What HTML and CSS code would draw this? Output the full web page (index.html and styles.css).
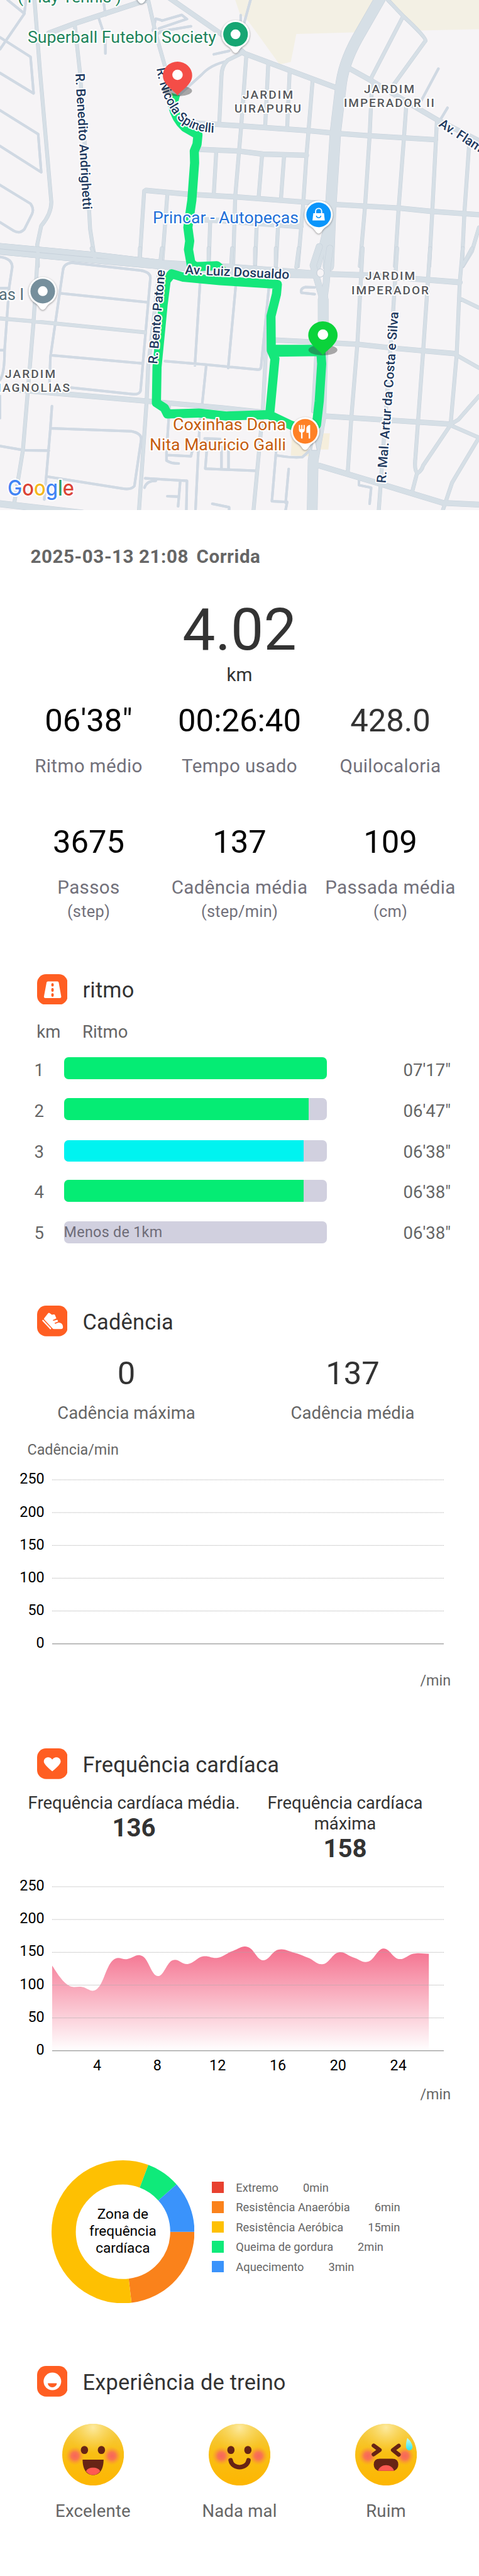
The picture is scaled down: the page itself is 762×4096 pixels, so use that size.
FILE: index.html
```html
<!DOCTYPE html>
<html lang="pt-BR">
<head>
<meta charset="utf-8">
<title>Corrida</title>
<link rel="stylesheet" href="styles.css">
</head>
<body>
<main class="page">

<svg class="map" viewBox="0 0 762 811" width="762" height="811">
  <defs>
    <g id="roads-north">
      <path class="w4" d="M25,0L80,80L0,290M85,0L80,75M0,220L100,335L110,550L0,430M0,650L125,790L135,1015L0,860M0,1090L100,1200Q112,1230 105,1260L80,1350Q65,1380 45,1360L0,1310M340,20L345,90M322,100L345,225V315M530,120L510,110L500,180M530,122L595,88L612,112L520,168M525,185L625,155M500,215L525,190M700,320L750,300M745,360Q690,380 660,440L580,570M820,0L797,150M788,90V150M1435,405L1380,590M1465,635L1440,710"/>
      <path class="w6" d="M113,0L130,400L168,1190Q168,1260 135,1330L122,1440L124,1568M245,150L262,430L292,1250L295,1350L308,1500M485,0L510,200L540,390M790,315L745,355Q725,390 725,450L718,720M806,335L790,735L783,880L770,1160L763,1568M878,380L868,745M948,430L940,755M1023,480L1010,770L1003,920L993,1190L975,1568M708,890L700,1140M858,912L847,1155M930,918L920,1165M472,1125L458,1515M548,1140L530,1568M688,1310L683,1568M840,1335L835,1568M910,1340L903,1568M1270,0L1320,95Q1395,220 1393,240L1280,520M1320,95L1215,460M1430,720L1415,1250L1405,1568M1330,620L1322,820L1305,1225L1293,1568M1218,480L1210,800L1195,1215L1178,1568M1535,870L1520,1260L1512,1568M1568,1340L1545,1480L1515,1568"/>
      <path class="w8" d="M540,-30L740,220L800,315L1098,515M480,0L250,135L160,195M640,725L790,742L1010,770L1098,785L1210,800L1425,823M650,880L780,890L860,908L1003,915M478,1122L620,1145L770,1160L990,1190L1100,1205L1300,1225L1410,1245L1568,1265M670,1295L720,1300L985,1335M1140,400L1220,480L1350,620L1435,710L1568,830"/>
      <path class="w10" d="M0,1450L310,1502L530,1548M0,1484L310,1535L540,1572"/>
      <path class="w12" d="M1075,1300L1040,1568"/>
      <path class="w18" d="M1245,-10L1170,225Q1122,380 1115,520L1098,780L1082,1240L1075,1568"/>
    </g>
    <g id="roads-south">
      <path class="w4" d="M0,50Q40,60 40,110L30,230L15,600Q15,740 0,775M0,235H30M0,600H15M235,85Q208,90 206,130L165,640L162,800M235,85L460,130Q495,140 492,180L460,840Q455,865 430,858L230,820M200,265L485,318M170,630L465,678M170,930L165,1060L145,1480M165,1060L430,1078Q465,1090 462,1130L440,1400Q430,1425 400,1415L155,1345M0,1165L80,1190L160,1192M0,870V1000M655,200L638,690M772,215L747,705M540,665L675,685L845,715Q855,715 855,690L880,235M675,690L660,950M1030,230L1000,228Q982,235 987,262L1030,270M555,930L545,1200V1250Q560,1268 585,1268M545,1218L625,1225L630,1190M680,1120L672,1298L835,1310M670,1120L720,1123M725,1170V1300M748,1170V1305M655,980L640,1541M475,1355L612,1370L610,1541M590,1370L583,1520M548,1460L585,1463M473,1410Q480,1370 510,1370M905,1170L890,1490L940,1495L935,1541M905,1220Q950,1235 990,1230L1015,1190M945,1300L935,1500M1175,1365V1395L1215,1410L1210,1505M695,1505L750,1525V1541"/>
      <path class="w6" d="M125,0L110,430L75,1190L45,1520M300,0L310,55M458,0V50M0,413L110,430L475,495M530,0L485,700L480,900L455,1545M683,0V80M760,0L757,90M835,0V90M903,0V100M978,0L970,110M875,480L870,620L860,965L830,1541M1035,640L1025,960M1187,0L1170,560L1150,1000L1138,1330M1300,0L1287,370L1240,1541M1408,0L1385,610L1360,1230Q1355,1310 1367,1325Q1380,1310 1385,1280L1475,1040M1365,1325L1350,1430M1515,0L1505,200L1495,625L1475,1040M1510,300L1568,350M1545,0L1515,100M1490,625L1568,705M1568,870L1500,1010L1472,1040L1568,1115M1568,1115L1480,1380L1450,1541"/>
      <path class="w8" d="M65,835L480,900L730,940L860,965M900,540L1170,565L1300,590L1490,620M1060,988L1470,1035"/>
      <path class="w10" d="M0,-14L310,38L530,85L770,110L1050,150L1200,158L1505,200M0,20L310,72L550,110L860,155L1040,160M1045,1280L1240,1385L1450,1500L1568,1510"/>
      <path class="w12" d="M1045,-10L1025,100L1040,195L1058,310M1080,0L1072,100L1068,200L1060,310M0,1505L120,1530L270,1560"/>
      <path class="w16" d="M1058,300V500L1050,1000L1025,1250L1022,1545"/>
    </g>
  </defs>
  <rect class="land" width="762" height="811"/>
  <g transform="scale(.48597 .26986)">
    <path class="park" d="M770,0L785,80L815,130L915,380L952,365L970,200L1180,190L1225,0ZM1275,0L1345,130L1370,180L1568,172V0Z"/>
    <use href="#roads-north" class="casing"/>
    <use href="#roads-north" class="street"/>
  </g>
  <g transform="translate(0 394.9) scale(.48597 .26986)">
    <path class="plaza" d="M955,1120L952,1220L1010,1225L1035,1150L1060,1090H1080L1075,1185H1000Z"/>
    <use href="#roads-south" class="casing"/>
    <use href="#roads-south" class="street"/>
    <ellipse class="island" cx="1049" cy="145" rx="12" ry="24"/>
    <path class="island" d="M1020,1190L1028,1100L1038,1190Z"/>
  </g>
  <g class="route">
    <path transform="scale(.48597 .26986)" d="M575,555L565,620Q575,700 605,750L648,795L645,850L636,890L637,960L628,1180L615,1340L621,1420L617,1470L627,1570"/>
    <path transform="translate(0 394.9) scale(.48597 .26986)" d="M627,90L640,108L710,102L740,150M1050,600L1053,680L1045,900L1036,1040L1010,1080L950,1040L880,980L740,988L650,970L548,976L538,940L512,910L514,700L534,330L544,190L562,150L600,170L720,190L908,212L905,270L887,400L888,600L900,650L883,975M888,595L1050,595M900,612L1050,608"/>
  </g>

  <g class="road-label">
    <path id="spinelli" d="M249,109C254,140 264,168 283,189C300,206 325,214 362,210" fill="none" stroke="none"/>
    <text><textPath href="#spinelli" textLength="151" lengthAdjust="spacingAndGlyphs">R. Nicola Spinelli</textPath></text>
    <text transform="translate(120 117) rotate(86.8)" textLength="217" lengthAdjust="spacingAndGlyphs">R. Benedito Andrighetti</text>
    <text transform="translate(697 200) rotate(33)">Av. Flam</text>
    <text transform="translate(294 435.5) rotate(2.8)" textLength="166" lengthAdjust="spacingAndGlyphs">Av. Luiz Dosualdo</text>
    <text transform="translate(250 579) rotate(-85.2)" textLength="150" lengthAdjust="spacingAndGlyphs">R. Bento Patone</text>
    <text transform="translate(613.5 768.5) rotate(-85.7)" textLength="273" lengthAdjust="spacingAndGlyphs">R. Mal. Artur da Costa e Silva</text>
  </g>
  <g class="district">
    <text x="386" y="156.5" textLength="80">JARDIM</text>
    <text x="373" y="179" textLength="106">UIRAPURU</text>
    <text x="579" y="148" textLength="80">JARDIM</text>
    <text x="547" y="170.3" textLength="144">IMPERADOR II</text>
    <text x="581" y="445.4" textLength="79">JARDIM</text>
    <text x="559" y="467.8" textLength="123">IMPERADOR</text>
    <text x="8" y="600.5" textLength="80">JARDIM</text>
    <text x="-15" y="623" textLength="126">MAGNOLIAS</text>
  </g>
  <g class="place">
    <text class="green" x="28" y="4" textLength="165" lengthAdjust="spacingAndGlyphs">( Play Tennis )</text>
    <text class="green" x="44" y="67.5" textLength="300" lengthAdjust="spacingAndGlyphs">Superball Futebol Society</text>
    <text class="blue" x="243" y="355.4" textLength="232" lengthAdjust="spacingAndGlyphs">Princar - Autopeças</text>
    <text class="slate" x="-2" y="476.7">as I</text>
    <text class="orange" x="275" y="683.6" textLength="180" lengthAdjust="spacingAndGlyphs">Coxinhas Dona</text>
    <text class="orange" x="238" y="715.5" textLength="217" lengthAdjust="spacingAndGlyphs">Nita Mauricio Galli</text>
  </g>

  <defs>
    <path id="poi" d="M0,29.8C-2,29.8 -4,28 -5.500,25.500C-8,21 -11,20 -15.500,16.300A22.500,22.500 0 1 1 15.500,16.300C11,20 8,21 5.500,25.500C4,28 2,29.800 0,29.800Z"/>
    <path id="pin" d="M0,32.500C-3,25 -23.300,16 -23.300,0A23.300,22 0 0 1 23.300,0C23.300,16 3,25 0,32.500Z"/>
  </defs>
  <g class="poi" transform="translate(225 -24)"><use href="#poi"/></g>
  <g class="poi" transform="translate(374.700 54.500)"><use href="#poi"/><circle r="19.600" fill="#17a673"/><circle r="7.800"/></g>
  <g class="poi" transform="translate(506.900 341.600)"><use href="#poi"/><circle r="19.600" fill="#0a95fb"/>
    <path d="M-8.500,-2.500H8.500L9.800,9H-9.800Z"/><path d="M-4.800,-2V-5.500a4.800,4.800 0 0 1 9.600,0V-2" fill="none" stroke="#fff" stroke-width="1.800"/><path d="M-3.500,1.500a3.500,3.200 0 0 0 7,0" fill="none" stroke="#0a95fb" stroke-width="1.600"/></g>
  <g class="poi" transform="translate(68 462.900)"><use href="#poi"/><circle r="19.600" fill="#768f9c"/><circle r="7.800"/></g>
  <g class="poi" transform="translate(485.500 685.800)"><use href="#poi"/><circle r="19.600" fill="#ff8126"/>
    <path d="M-10,-10h1.900v6.500h1.800V-10h1.900v6.500h1.800V-10h1.900v8C-.7,.3 -2.300,1.600 -4.200,2V11.500h-2.400V2C-8.500,1.600 -10,.3 -10,-2ZM7.900,-10V11.500H5.500V2.500H1.900V-4C1.900,-7.500 4.500,-10 7.900,-10Z"/></g>
  <ellipse class="pin-shade" cx="282.500" cy="144.500" rx="23" ry="8.500"/>
  <g transform="translate(282.400 120)"><use href="#pin" fill="#f44d47"/><ellipse rx="8.300" ry="8.200" cy="-1" fill="#fff"/></g>
  <ellipse class="pin-shade" cx="513.700" cy="556.500" rx="23" ry="8.500"/>
  <g transform="translate(513.700 533)"><use href="#pin" fill="#0bd33b"/><ellipse rx="8.300" ry="8.200" cy="-1" fill="#fff"/></g>
  <text class="google" x="12" y="787.500" textLength="106" lengthAdjust="spacingAndGlyphs"><tspan fill="#4285f4">G</tspan><tspan fill="#db4437">o</tspan><tspan fill="#f4b81c">o</tspan><tspan fill="#4285f4">g</tspan><tspan fill="#34a05a">l</tspan><tspan fill="#db4437">e</tspan></text>
</svg>

<section class="summary">
  <h1 class="when"><span>2025-03-13 21:08</span><span>Corrida</span></h1>
  <p class="distance">4.02</p>
  <p class="distance-unit">km</p>
  <div class="stats">
    <div class="stat"><b>06'38"</b><span>Ritmo médio</span></div>
    <div class="stat"><b>00:26:40</b><span>Tempo usado</span></div>
    <div class="stat soft"><b>428.0</b><span>Quilocaloria</span></div>
    <div class="stat"><b>3675</b><span>Passos</span><small>(step)</small></div>
    <div class="stat"><b>137</b><span>Cadência média</span><small>(step/min)</small></div>
    <div class="stat"><b>109</b><span>Passada média</span><small>(cm)</small></div>
  </div>
</section>

<section class="pace">
  <header class="head">
    <svg class="badge" viewBox="0 0 24 24"><rect class="tile" width="24" height="24" rx="7"/><path d="M8.500,5.700H15.900Q16.800,5.700 17,6.600L18.900,17.400Q19.100,18.700 17.800,18.700H6.500Q5.200,18.700 5.400,17.400L7.400,6.600Q7.600,5.700 8.500,5.700Z"/><path d="M12.100,8V8.700M12.100,11.800V12.800M12.100,15.800V16.800" stroke="#ff5e22" stroke-width="1.900" stroke-linecap="round"/></svg>
    <h2>ritmo</h2>
  </header>
  <div class="pace-cols"><span>km</span><span>Ritmo</span></div>
  <ol class="splits">
    <li><span>1</span><div class="bar"><i style="width:100%"></i></div><time>07'17"</time></li>
    <li><span>2</span><div class="bar"><i style="width:93.1%"></i></div><time>06'47"</time></li>
    <li class="low"><span>3</span><div class="bar best"><i style="width:91.2%"></i></div><time>06'38"</time></li>
    <li><span>4</span><div class="bar"><i style="width:91.2%"></i></div><time>06'38"</time></li>
    <li class="low"><span>5</span><div class="bar">Menos de 1km</div><time>06'38"</time></li>
  </ol>
</section>

<section class="cadence">
  <header class="head">
    <svg class="badge" viewBox="0 0 24 24"><rect class="tile" width="24" height="24" rx="7"/><path d="M5.600,9.800L8.600,6Q9.200,5.400 9.900,5.900L11.600,7.200L13.200,6.900Q13.900,6.900 14.100,7.500L15.100,10L12.300,11.300L12.700,12L15.900,11.100L16.500,12.500L13.700,13.600L14.200,14.300L16.300,13.400C19,13 20.300,15 20.300,16.800Q20.300,18.400 18.700,18.400H13.200Q12.600,18.400 12.100,17.900L5.700,11Q5.100,10.400 5.600,9.800Z"/><path d="M4.600,11.700L10.500,18" stroke="#fff" stroke-width="1.100" stroke-linecap="round"/></svg>
    <h2>Cadência</h2>
  </header>
  <div class="pair">
    <div><b>0</b><span>Cadência máxima</span></div>
    <div><b>137</b><span>Cadência média</span></div>
  </div>
  <p class="axis-title">Cadência/min</p>
  <div class="chart">
    <div class="scale"><span>250</span><span>200</span><span>150</span><span>100</span><span>50</span><span>0</span></div>
    <svg class="plot" viewBox="0 0 623 313"><path class="grid" d="M0,26H623M0,78.100H623M0,130.300H623M0,182.400H623M0,234.600H623"/><path class="base" d="M0,286.700H623"/></svg>
  </div>
  <p class="unit">/min</p>
</section>

<section class="heart">
  <header class="head">
    <svg class="badge" viewBox="0 0 24 24"><rect class="tile" width="24" height="24" rx="7"/><path d="M11.900,18Q5.300,12.500 5.300,10.300C5.300,6.800 9.800,5.800 11.900,8.700C14,5.800 18.500,6.800 18.500,10.300Q18.500,12.500 11.900,18Z"/></svg>
    <h2>Frequência cardíaca</h2>
  </header>
  <div class="rates">
    <div>Frequência cardíaca média.<b>136</b></div>
    <div>Frequência cardíaca máxima<b>158</b></div>
  </div>
  <div class="chart">
    <div class="scale"><span>250</span><span>200</span><span>150</span><span>100</span><span>50</span><span>0</span></div>
    <svg class="plot" viewBox="0 0 623 313">
      <defs><linearGradient id="pulse" x1="0" y1="0" x2="0" y2="1"><stop offset="0" stop-color="#f46e8c"/><stop offset="1" stop-color="#fff"/></linearGradient></defs>
      <path transform="translate(-82.600 -238) scale(.48597 .40483)" fill="url(#pulse)" d="M170,962C180,980 199,1019 219,1036S249,1042 269,1046S298,1073 318,1052S347,966 367,943S396,940 416,936S446,912 466,925S495,1000 515,1003S544,950 564,941S594,959 614,956S643,931 663,926S692,935 712,931S742,912 762,904S791,882 811,889S840,939 860,941S889,906 909,900S939,904 959,910S988,922 1008,931S1037,960 1057,956S1087,915 1107,910S1136,923 1156,930S1185,953 1205,946S1234,897 1254,895S1284,932 1304,936S1333,919 1353,915S1383,915 1403,916V1296H170Z"/>
      <path class="grid" d="M0,26H623M0,78.100H623M0,130.300H623M0,182.400H623M0,234.600H623"/><path class="base" d="M0,286.700H623"/>
    </svg>
  </div>
  <div class="minutes"><span>4</span><span>8</span><span>12</span><span>16</span><span>20</span><span>24</span></div>
  <p class="unit">/min</p>
  <div class="zones">
    <div class="donut">
      <svg viewBox="0 0 227.400 227.400">
        <g fill="none" stroke-width="38.600">
          <circle cx="113.700" cy="113.700" r="94.400" pathLength="26" stroke="#fa821b" stroke-dasharray="6 20"/>
          <circle cx="113.700" cy="113.700" r="94.400" pathLength="26" stroke="#fec002" stroke-dasharray="15 11" stroke-dashoffset="-6"/>
          <circle cx="113.700" cy="113.700" r="94.400" pathLength="26" stroke="#0fea7a" stroke-dasharray="2 24" stroke-dashoffset="-21"/>
          <circle cx="113.700" cy="113.700" r="94.400" pathLength="26" stroke="#3a93fb" stroke-dasharray="3 23" stroke-dashoffset="-23"/>
        </g>
      </svg>
      <p>Zona de<br>frequência<br>cardíaca</p>
    </div>
    <ul class="legend">
      <li class="extreme"><span>Extremo</span>0min</li>
      <li class="anaerobic"><span>Resistência Anaeróbia</span>6min</li>
      <li class="aerobic"><span>Resistência Aeróbica</span>15min</li>
      <li class="burn"><span>Queima de gordura</span>2min</li>
      <li class="warmup"><span>Aquecimento</span>3min</li>
    </ul>
  </div>
</section>

<section class="feeling">
  <header class="head">
    <svg class="badge" viewBox="0 0 24 24"><rect class="tile" width="24" height="24" rx="7"/><circle cx="12" cy="12.100" r="6.900"/><path d="M8.400,13.500H15.500A3.500,3.200 0 0 1 8.400,13.500Z" fill="#ff5e22"/></svg>
    <h2>Experiência de treino</h2>
  </header>
  <div class="faces">
    <div>
      <svg class="face" viewBox="0 0 100 100">
        <defs>
          <linearGradient id="skin" x1="0" y1="0" x2="0" y2="1"><stop offset="0" stop-color="#f3cf52"/><stop offset=".45" stop-color="#f9bf15"/><stop offset="1" stop-color="#fdb602"/></linearGradient>
          <radialGradient id="shine" cx=".5" cy=".06" r=".42"><stop offset="0" stop-color="#fdeaa0"/><stop offset="1" stop-color="#fbd44a" stop-opacity="0"/></radialGradient>
          <radialGradient id="blush"><stop offset="0" stop-color="#f8655a"/><stop offset=".4" stop-color="#f8695a" stop-opacity=".85"/><stop offset="1" stop-color="#fb9530" stop-opacity="0"/></radialGradient>
          <linearGradient id="drop" x1="0" y1="0" x2="0" y2="1"><stop offset="0" stop-color="#c5fbf4"/><stop offset="1" stop-color="#2ce6f3"/></linearGradient>
          <g id="head"><circle cx="50" cy="50" r="50" fill="url(#skin)"/><circle cx="50" cy="50" r="50" fill="url(#shine)"/><circle cx="20.500" cy="52" r="15" fill="url(#blush)"/><circle cx="80.500" cy="52" r="15" fill="url(#blush)"/></g>
        </defs>
        <use href="#head"/><g fill="#672415"><ellipse cx="36" cy="42.400" rx="5.900" ry="6.500"/><ellipse cx="63.500" cy="42.400" rx="5.900" ry="6.500"/><path d="M33,58H67C67,73 61,83 50,83S33,73 33,58Z"/></g><path fill="#ff5a52" d="M38.600,77C41,69 59,69 61.400,77C58,81.500 54,83 50,83S42,81.500 38.600,77Z"/>
      </svg>
      <span>Excelente</span>
    </div>
    <div>
      <svg class="face" viewBox="0 0 100 100"><use href="#head"/><g fill="#672415"><ellipse cx="36" cy="42.400" rx="5.900" ry="6.500"/><ellipse cx="63.500" cy="42.400" rx="5.900" ry="6.500"/></g><path d="M35.500,59C38,74 62,74 64.500,59" fill="none" stroke="#672415" stroke-width="7.200" stroke-linecap="round"/></svg>
      <span>Nada mal</span>
    </div>
    <div>
      <svg class="face" viewBox="0 0 100 100"><use href="#head"/><path d="M30,35.300L39.700,42.300L30,49.400M70.600,35.500L61.200,42.500L70.600,50" fill="none" stroke="#672415" stroke-width="6.600" stroke-linecap="round" stroke-linejoin="round"/><path fill="#672415" d="M40,56.600H60Q69.900,56.600 69.900,66Q69.900,73 63,76.100H37Q30.100,73 30.100,66Q30.100,56.600 40,56.600Z"/><path fill="#ff5a52" d="M37,76.100C41,64 59,64 63,76.100Z"/><path fill="url(#drop)" d="M84.500,23C88,26 93,32 93,37.500A5.300,5.300 0 0 1 82.400,37.500C82,33 83,27 84.500,23Z"/></svg>
      <span>Ruim</span>
    </div>
  </div>
</section>
</main>
</body>
</html>
```
FILE: styles.css
```css
* { box-sizing: border-box; margin: 0; padding: 0; }
body { background: #fff; font-family: Roboto, "Liberation Sans", sans-serif; color: #333; }
.page { width: 762px; height: 4096px; display: flex; flex-direction: column; overflow: hidden; }
b, h1, h2 { font-weight: 400; }
ul, ol { list-style: none; }

/* Map */
.map { display: block; flex: none; overflow: hidden; }
.land { fill: #f6f4f6; }
.park { fill: #f3f0e4; }
.plaza { fill: #f5eedc; }
.island { fill: #f6f4f6; stroke: #c4ced8; vector-effect: non-scaling-stroke; }
.casing, .street { fill: none; stroke-linecap: round; stroke-linejoin: round; }
.casing { stroke: #c6d0da; --case: 1px; }
.street { stroke: #d6dfe6; --case: 0px; }
.casing path, .street path, #roads-north path, #roads-south path { vector-effect: non-scaling-stroke; }
.w4 { stroke: #d0d9e3; stroke-width: 4px; }
.w6 { stroke-width: calc(5.2px + var(--case)); }
.w8 { stroke-width: calc(7.4px + var(--case)); }
.w10 { stroke-width: calc(8.2px + var(--case)); }
.w12 { stroke-width: calc(10px + var(--case)); }
.w16 { stroke-width: calc(16px + var(--case)); }
.w18 { stroke-width: calc(17px + var(--case)); }
.route path { fill: none; stroke: #15e77b; stroke-width: 14.500px; stroke-linejoin: round; vector-effect: non-scaling-stroke; }
.map text { stroke: #fff; stroke-width: 4px; stroke-linejoin: round; paint-order: stroke; }
.road-label { font-size: 20.500px; font-weight: 500; fill: #1f3a5f; }
.district { font-size: 19px; fill: #55575b; font-weight: 500; }
.place { font-size: 25.400px; }
.green { fill: #1f845c; }
.blue { fill: #1f6fd8; }
.slate { fill: #55707c; }
.orange { fill: #c65d10; }
.poi { fill: #fff; }
.poi > use { filter: drop-shadow(0 1px 1.500px rgba(0, 0, 0, .4)); }
.pin-shade { fill: #333; opacity: .4; }
.google { font: 500 34px Inter, Roboto, sans-serif; }

/* Summary */
.summary { height: 737.600px; flex: none; padding-top: 56px; text-align: center; }
.when { display: flex; gap: 12.500px; padding-left: 48.500px; font-size: 29.600px; line-height: 36px; font-weight: 700; letter-spacing: .550px; color: #666; }
.distance { margin-top: 48.500px; font-size: 93px; line-height: 100px; }
.distance-unit { margin-top: 3px; font-size: 29.600px; line-height: 36px; }
.stats { display: grid; grid-template-columns: repeat(3, 240px); justify-content: center; row-gap: 72.400px; margin-top: 25.500px; }
.stat { display: flex; flex-direction: column; align-items: center; white-space: nowrap; }
.stat b { font-size: 50.800px; line-height: 60px; color: #000; }
.stat.soft b { color: #333; }
.stat span { margin-top: 24.200px; font-size: 29.600px; line-height: 36px; letter-spacing: .350px; color: #72717b; }
.stat small { margin-top: 4.800px; font-size: 25.400px; line-height: 30px; letter-spacing: .250px; color: #72717b; }

/* Section heads */
.head { display: flex; align-items: center; height: 48.700px; padding-left: 58.800px; gap: 24px; }
.head h2 { margin-top: 2.500px; font-size: 34.400px; line-height: 42px; letter-spacing: .200px; }
.badge { width: 48.700px; height: 48.700px; fill: #fff; flex: none; }
.tile { fill: #ff5e22; }

/* Pace */
.pace { height: 527.900px; flex: none; font-size: 27.500px; line-height: 34px; color: #666; }
.pace h2 { color: #333; }
.pace-cols { display: grid; grid-template-columns: 72.700px 1fr; margin-top: 26.500px; padding-left: 58.300px; }
.splits { margin-top: 11.500px; }
.splits li { display: grid; grid-template-columns: 47px 418px 1fr; align-items: center; height: 64.900px; padding: 0 45px 0 54.600px; }
.splits time { text-align: right; }
.bar { position: relative; top: -3px; height: 34.600px; border-radius: 7px; overflow: hidden; background: #d1d0df; font-size: 23.300px; line-height: 35px; letter-spacing: .300px; color: #6e6c78; }
.low .bar { top: -1.500px; }
.bar i { display: block; height: 100%; background: #05ec74; }
.bar.best i { background: #00f3f0; }

/* Charts */
.chart { display: flex; gap: 12px; }
.scale { width: 70.600px; text-align: right; font-size: 23.300px; color: #000; }
.scale span { display: block; height: 52.140px; line-height: 49.400px; }
.plot { width: 623px; height: 313px; }
.grid { stroke: #a8a8a8; stroke-width: 1; stroke-dasharray: 1 1; }
.base { stroke: #a8a8a8; stroke-width: 1.600; }
.unit { padding-right: 45px; text-align: right; font-size: 23.300px; line-height: 28px; color: #666; }

/* Cadence */
.cadence { height: 703.500px; flex: none; }
.pair { display: grid; grid-template-columns: 360px 360px; justify-content: center; margin-top: 29px; text-align: center; }
.pair b { display: block; font-size: 50.800px; line-height: 60px; }
.pair span { display: block; margin-top: 16.300px; font-size: 27.500px; line-height: 34px; color: #666; }
.axis-title { margin-top: 26.400px; padding-left: 43.500px; font-size: 23.300px; line-height: 28px; color: #666; }
.cadence .chart { margin-top: 8.600px; }
.cadence .unit { margin-top: 17.800px; }

/* Heart rate */
.heart { height: 982.400px; flex: none; }
.rates { display: grid; grid-template-columns: 340px 300px; column-gap: 16px; margin-top: 21.800px; padding-left: 43px; font-size: 27.500px; line-height: 33px; text-align: center; height: 113px; }
.rates b { display: block; margin-top: 1px; font-size: 40.200px; line-height: 46px; font-weight: 700; }
.rates div:first-child { white-space: nowrap; }
.heart .chart { margin-top: 10.700px; }
.minutes { display: grid; grid-template-columns: repeat(6, 95.840px); margin-top: -16.700px; padding-left: 106.600px; text-align: center; font-size: 23.300px; line-height: 28px; color: #000; }
.heart .unit { margin-top: 17.600px; }
.zones { display: flex; margin-top: 90.700px; padding-left: 81.700px; }
.donut { display: grid; place-items: center; width: 227.400px; height: 227.400px; }
.donut > * { grid-area: 1 / 1; }
.donut svg { width: 100%; height: 100%; }
.donut p { font-size: 22.600px; line-height: 26.800px; text-align: center; color: #000; }
.legend { margin: 27.800px 0 0 28.200px; font-size: 18.300px; color: #666; }
.legend li { display: flex; align-items: center; height: 31.500px; }
.legend li::before { content: ""; width: 18.600px; height: 18.600px; margin: -1px 19.500px 0 0; background: var(--zone); }
.legend span { margin-right: 39px; }
.extreme { --zone: #e8412f; }
.anaerobic { --zone: #fa821b; }
.aerobic { --zone: #fec002; }
.burn { --zone: #0fea7a; }
.warmup { --zone: #3a93fb; }

/* Feeling */
.faces { display: grid; grid-template-columns: repeat(3, 233px); justify-content: center; margin-top: 43.100px; }
.faces div { display: flex; flex-direction: column; align-items: center; }
.face { width: 98.200px; height: 98.200px; }
.faces span { margin-top: 23.200px; font-size: 27.500px; line-height: 34px; letter-spacing: .200px; color: #666; }
```
